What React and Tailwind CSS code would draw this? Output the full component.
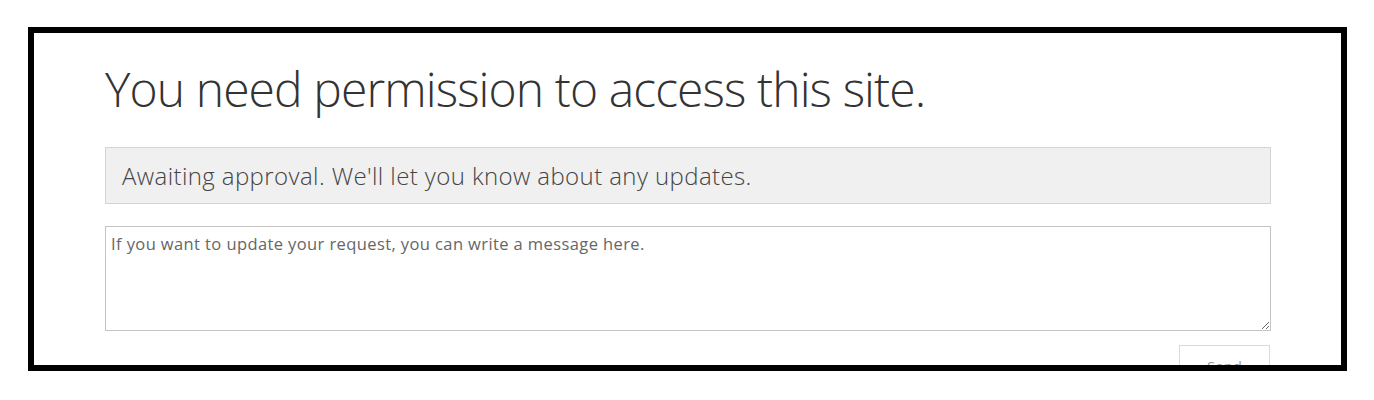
export default function App() {
  return (
    <div className="min-h-[400px] bg-white pl-[28px] pt-[27px]" style={{ fontFamily: '"Open Sans", "Noto Sans", sans-serif' }}>
      <div className="w-[1319px] h-[344px] overflow-hidden border-[6px] border-black bg-white pl-[71px] pr-[70px] pt-[25px]">
        <h1 className="text-[48px] font-light leading-[62px] text-[#333333] tracking-[-0.9px]">
          You need permission to access this site.
        </h1>
        <div className="mt-[27px] h-[57px] flex items-center border border-[#d4d4d4] bg-[#f0f0f0] px-[16px]">
          <span className="text-[24px] font-light text-[#444444] tracking-[0.4px]">
            Awaiting approval. We'll let you know about any updates.
          </span>
        </div>
        <textarea
          className="mt-[22px] block w-full h-[105px] border border-[#c4c4c4] px-[5px] py-[5px] text-[16.5px] tracking-[0.4px] text-[#555555] placeholder:text-[#666666] outline-none resize-y"
          placeholder="If you want to update your request, you can write a message here."
        />
        <div className="mt-[14px] flex justify-end pr-[1px]">
          <button className="w-[91px] h-[42px] border border-[#dadada] bg-white text-[15px] text-[#999999]">
            Send
          </button>
        </div>
      </div>
    </div>
  );
}
